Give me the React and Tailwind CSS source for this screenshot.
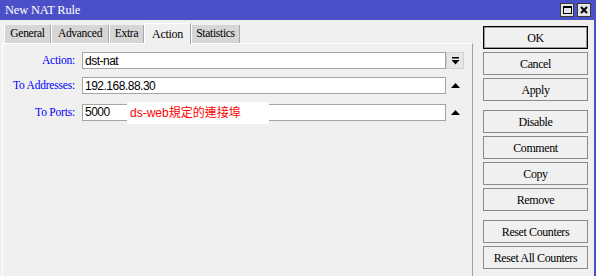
import React from 'react';

// MikroTik-style "New NAT Rule" dialog, Action tab
const serif = "font-['Liberation_Serif','Times_New_Roman',serif]";
const sans = "font-['Liberation_Sans','Noto_Sans_CJK_TC',sans-serif]";

const tabs = [
  { name: 'General', w: 'w-[47px]' },
  { name: 'Advanced', w: 'w-[58px]' },
  { name: 'Extra', w: 'w-[35px]' },
  { name: 'Action', w: 'w-[47px]', active: true },
  { name: 'Statistics', w: 'w-[49px]' },
];

const buttonGroups = [
  ['OK', 'Cancel', 'Apply'],
  ['Disable', 'Comment', 'Copy', 'Remove'],
  ['Reset Counters', 'Reset All Counters'],
];

function TitleButton({ children }) {
  return (
    <div className="w-[14px] h-[14px] bg-[#e4e4e4] border border-[#3a3a3a] flex items-center justify-center">
      {children}
    </div>
  );
}

function Tab({ name, w, active }) {
  if (active) {
    return (
      <div className={`${w} h-[21px] -mb-px bg-[#f0f0f0] border-t border-l border-white border-r border-r-[#a0a0a0] flex items-center justify-center text-[12px] tracking-[-0.3px] text-black z-10`}>
        {name}
      </div>
    );
  }
  return (
    <div className={`${w} h-[18px] bg-[#d6d6d6] border-l border-white border-r border-r-[#a8a8a8] flex items-center justify-center text-[11.5px] tracking-[-0.3px] text-black`}>
      {name}
    </div>
  );
}

function UpArrow() {
  return (
    <div className="w-[18px] h-[16px] flex items-center justify-center">
      <svg width="9" height="5" viewBox="0 0 9 5">
        <polygon points="4.5,0 9,5 0,5" fill="#000" />
      </svg>
    </div>
  );
}

function Field({ label, value, children, className = '' }) {
  return (
    <div className={`flex items-center ${className}`}>
      <div className={`w-[72px] text-right text-[11.5px] tracking-[-0.2px] text-[#0000ff] ${serif}`}>{label}</div>
      <div className="relative ml-[7px] w-[364px] h-[17px] bg-white border border-[#a5a5a5] flex items-center pl-[2px]">
        <span className={`text-[12px] tracking-[-0.5px] text-black ${sans}`}>{value}</span>
        {children}
      </div>
    </div>
  );
}

export default function App() {
  return (
    <div className={`w-[596px] h-[276px] bg-[#f0f0f0] border-r-2 border-[#4c50c8] flex flex-col overflow-hidden ${serif}`}>
      <div className="h-[20px] shrink-0 bg-[#4c50c8] flex items-center justify-between pl-[5px] pr-[3px]">
        <span className="text-[12.5px] text-white tracking-[-0.2px]">New NAT Rule</span>
        <div className="flex gap-[3px]">
          <TitleButton>
            <div className="w-[9px] h-[8px] border border-t-2 border-black" />
          </TitleButton>
          <TitleButton>
            <svg width="8" height="8" viewBox="0 0 8 8">
              <path d="M1 1 L7 7 M7 1 L1 7" stroke="#000" strokeWidth="2" />
            </svg>
          </TitleButton>
        </div>
      </div>

      <div className="flex flex-1">
        <div className="ml-[2px] w-[471px] flex flex-col">
          <div className="h-[23px] flex items-end pl-[2px]">
            {tabs.map((t) => (
              <Tab key={t.name} {...t} />
            ))}
          </div>
          <div className="flex-1 border-t border-l border-white border-r border-r-[#a0a0a0] pt-[8px]">
            <div className="flex items-center">
              <Field label="Action:" value="dst-nat" />
              <div className="w-[18px] h-[17px] bg-[#e6e6e6] border border-[#d0d0d0] flex items-center justify-center">
                <svg width="9" height="8" viewBox="0 0 9 8">
                  <rect x="1" y="0" width="7" height="1.5" fill="#000" />
                  <polygon points="0.5,3 8.5,3 4.5,7.5" fill="#000" />
                </svg>
              </div>
            </div>
            <div className="flex items-center mt-[8px]">
              <Field label="To Addresses:" value="192.168.88.30" />
              <UpArrow />
            </div>
            <div className="flex items-center mt-[9px]">
              <Field label="To Ports:" value="5000">
                <div className="absolute left-[44px] top-[-3px] w-[142px] h-[22px] bg-white flex items-center pl-[3px]">
                  <span className={`text-[12px] text-[#ff0000] ${sans}`}>ds-web規定的連接埠</span>
                </div>
              </Field>
              <UpArrow />
            </div>
          </div>
        </div>

        <div className="flex-1 pl-[10px] pt-[6px] flex flex-col gap-[9px]">
          {buttonGroups.map((group, gi) => (
            <div key={gi} className="flex flex-col gap-[3px]">
              {group.map((label) => (
                <div
                  key={label}
                  className={`w-[105px] h-[23px] bg-[#f0f0f0] flex items-center justify-center text-[12px] text-black tracking-[-0.4px] border ${
                    label === 'OK' ? 'border-black shadow-[inset_0_0_0_1px_#9a9a9a]' : 'border-[#8a8a8a]'
                  }`}
                >
                  {label}
                </div>
              ))}
            </div>
          ))}
        </div>
      </div>
    </div>
  );
}
